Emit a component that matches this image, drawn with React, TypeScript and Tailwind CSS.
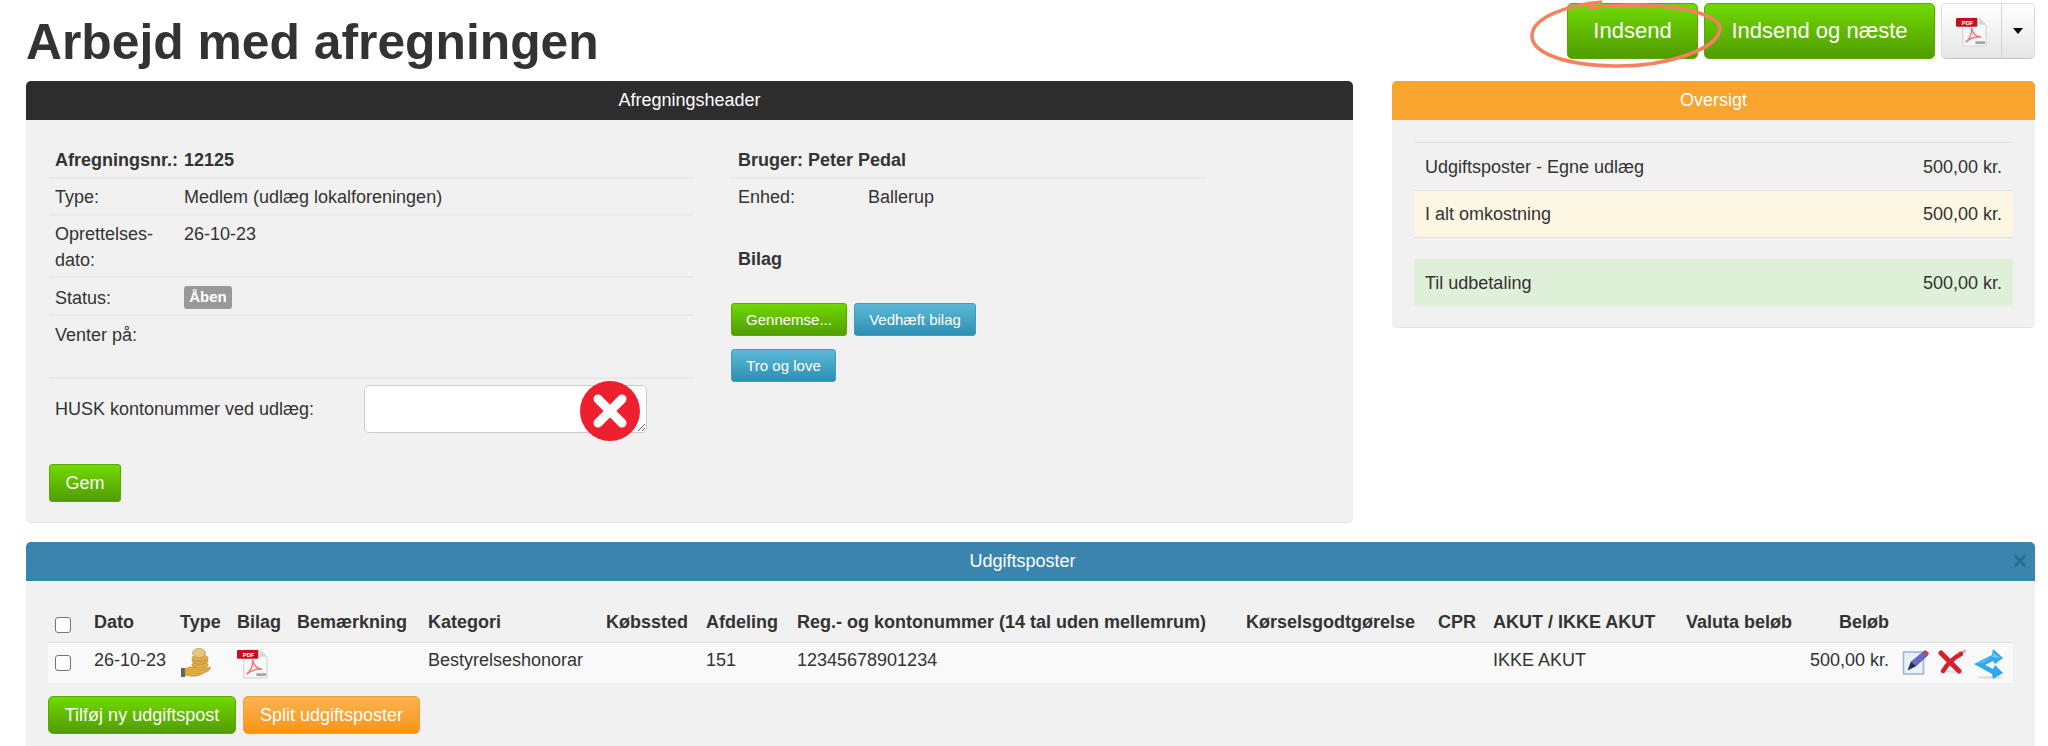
import React from 'react'

const green = 'bg-gradient-to-b from-[#70da00] to-[#519c00] border border-[#5aa800]'
const blue = 'bg-gradient-to-b from-[#5bb9d8] to-[#2f8fb2] border border-[#3f9dbf]'
const orange = 'bg-gradient-to-b from-[#fbb450] to-[#f89406] border border-[#f0a030]'

function PdfIcon({ className }: { className: string }) {
  return (
    <svg viewBox="0 0 32 32" className={className}>
      <path d="M7 2h17l7 7v22H7z" fill="#f7f7f7" stroke="#cfcfcf" />
      <path d="M24 2v7h7z" fill="#d5d5d5" />
      <rect x="0" y="2" width="22" height="9" rx="1" fill="#c5101c" />
      <text x="6" y="9" fontSize="6" fontWeight="700" fill="#fff" fontFamily="Liberation Sans, sans-serif">PDF</text>
      <path d="M10 27c4-3 7-9 6-15 1 6 4 9 10 10-6-1-11 1-16 5z" fill="none" stroke="#ec7a82" strokeWidth="1.6" />
      <rect x="20" y="26" width="10" height="3" fill="#a8a8a8" />
    </svg>
  )
}

function CoinsIcon() {
  return (
    <svg viewBox="0 0 32 30" className="w-[32px] h-[30px]">
      <path d="M1 20h4v9H1z" fill="#5c6670" />
      <path d="M5 21c5-3 9-2 12 0h5l8-2c1 1 0 3-2 4l-8 4c-6 2-10 1-15 0z" fill="#e2a93c" stroke="#b98722" strokeWidth=".6" />
      {[17, 13, 10].map((y) => (
        <ellipse key={y} cx="20" cy={y} rx="8" ry="3.2" fill="#dfae4c" stroke="#b98722" strokeWidth=".7" />
      ))}
      <ellipse cx="19" cy="5" rx="6.5" ry="4.6" fill="#e5c77f" stroke="#c49a3a" strokeWidth=".7" />
    </svg>
  )
}

function EditIcon() {
  return (
    <svg viewBox="0 0 28 26" className="w-[28px] h-[26px]">
      <rect x="1.5" y="3" width="20" height="22" fill="#e8f0fa" stroke="#a3b4d2" strokeWidth="1.6" />
      <path d="M6 21l3-8L21 3l5 3-12 11z" fill="#6a68c8" stroke="#4a46a0" strokeWidth=".6" />
      <path d="M21 3l2-2 4 3-1 2z" fill="#d8323a" />
      <path d="M6 21l3-8 5 4z" fill="#2c2c50" />
    </svg>
  )
}

function DeleteIcon() {
  return (
    <svg viewBox="0 0 28 26" className="w-[28px] h-[26px]" fill="none" strokeLinecap="round">
      <path d="M21 4L27 2" stroke="#eeaab0" strokeWidth="2.5" />
      <path d="M8 22L24 24" stroke="#e0e0e0" strokeWidth="2" />
      <path d="M3 4L21 22" stroke="#d8202c" strokeWidth="5" />
      <path d="M5 22C10 14 15 9 23 5" stroke="#d8202c" strokeWidth="4.5" />
    </svg>
  )
}

function ShareIcon() {
  return (
    <svg viewBox="0 0 30 30" className="w-[30px] h-[30px]">
      <ellipse cx="16" cy="28.5" rx="13" ry="1.4" fill="#dedede" />
      <path d="M0 15L18 6l1-6 10 9-8 6-2-3-8 4 8 4 2-4 8 8-10 6-1-5z" fill="#2fa8ee" />
      <path d="M2 15L18 8l2-4 6 5-8-1-8 5z" fill="#74caf6" />
    </svg>
  )
}

const HEAD = [
  'Dato', 'Type', 'Bilag', 'Bemærkning', 'Kategori', 'Købssted', 'Afdeling',
  'Reg.- og kontonummer (14 tal uden mellemrum)', 'Kørselsgodtgørelse', 'CPR',
  'AKUT / IKKE AKUT', 'Valuta beløb',
]

const box = 'block w-[16px] h-[16px] rounded-[3px] border border-[#767676] bg-white'

export default function App() {
  return (
    <div className="h-[746px] overflow-hidden bg-white pl-[26px] pr-[13px] text-[#333] text-[18px] leading-[26px] font-['Liberation_Sans',Arial,sans-serif]">
      <div className="h-[81px] flex justify-between">
        <h1 className="text-[49.8px] leading-[85px] font-bold">Arbejd med afregningen</h1>
        <div className="flex pt-[3px] h-[59px] text-white text-[22px]">
          <div className="relative">
            <button className={`h-[56px] w-[131px] rounded-[5px] ${green}`}>Indsend</button>
            {/* haandtegnet ring */}
            <svg viewBox="0 0 192 70" className="absolute left-[-37px] top-[-3px] w-[192px] h-[70px]" fill="none">
              <path d="M72 2C38 5 3 17 2 35c-1 17 30 30 82 31 50 1 104-16 106-37C191 12 130-1 58 8" stroke="#f6805f" strokeWidth="3.5" />
            </svg>
          </div>
          <button className={`ml-[6px] h-[56px] w-[231px] rounded-[5px] ${green}`}>Indsend og næste</button>
          <div className="ml-[6px] h-[56px] w-[94px] flex rounded-[5px] border border-[#dcdcdc] border-b-[#c4c4c4] bg-gradient-to-b from-white to-[#e6e6e6]">
            <div className="w-[60px] flex items-center justify-center border-r border-[#d4d4d4]">
              <PdfIcon className="w-[31px] h-[31px]" />
            </div>
            <div className="flex-1 flex items-center justify-center">
              <span className="w-0 h-0 border-x-[5px] border-x-transparent border-t-[6px] border-t-black" />
            </div>
          </div>
        </div>
      </div>

      <div className="flex gap-[39px] items-start">
        <section className="w-[1327px] h-[442px] bg-[#f1f1f1] rounded-[5px] border-b border-[#e4e4e4]">
          <div className="h-[39px] rounded-t-[5px] bg-[#2d2d2d] text-white text-center leading-[39px]">Afregningsheader</div>
          <div className="flex pl-[23px] pt-[18px]">
            <div className="w-[644px]">
              <div className="h-[41px] pl-[6px] pt-[9px] font-bold border-b-2 border-[#e9e9e9] flex">
                <span className="w-[129px]">Afregningsnr.:</span><span>12125</span>
              </div>
              <div className="h-[37px] pl-[6px] pt-[5px] border-b-2 border-[#e9e9e9] flex">
                <span className="w-[129px]">Type:</span><span>Medlem (udlæg lokalforeningen)</span>
              </div>
              <div className="h-[62px] pl-[6px] pt-[5px] border-b-2 border-[#e9e9e9] flex">
                <span className="w-[129px]">Oprettelses-<br />dato:</span><span>26-10-23</span>
              </div>
              <div className="h-[38px] pl-[6px] pt-[7px] border-b-2 border-[#e9e9e9] flex">
                <span className="w-[129px]">Status:</span>
                <span className="mt-[1px] h-[23px] w-[48px] text-center rounded-[3px] bg-[#999] text-white text-[15px] leading-[22px] font-bold">Åben</span>
              </div>
              <div className="h-[63px] pl-[6px] pt-[6px] border-b-2 border-[#e9e9e9]">Venter på:</div>
              <div className="flex items-start pt-[6px] pl-[6px]">
                <span className="w-[309px] pt-[11px]">HUSK kontonummer ved udlæg:</span>
                <div className="relative">
                  <textarea className="block w-[283px] h-[48px] bg-white rounded-[5px] border border-[#ccc]" />
                  <div className="absolute left-[216px] top-[-4px] w-[60px] h-[60px] rounded-full bg-[#ee1f2f] flex items-center justify-center">
                    <svg viewBox="0 0 40 40" className="w-[40px] h-[40px]">
                      <path d="M8 8l24 24M32 8L8 32" stroke="#fff" strokeWidth="9" strokeLinecap="round" />
                    </svg>
                  </div>
                </div>
              </div>
              <button className={`block mt-[31px] w-[72px] h-[38px] rounded-[3px] text-white ${green}`}>Gem</button>
            </div>
            <div className="ml-[38px] w-[474px]">
              <div className="h-[41px] pl-[7px] pt-[9px] font-bold border-b-2 border-[#e9e9e9]">Bruger: Peter Pedal</div>
              <div className="pl-[7px] pt-[5px] flex">
                <span className="w-[130px]">Enhed:</span><span>Ballerup</span>
              </div>
              <div className="pl-[7px] mt-[36px] font-bold">Bilag</div>
              <div className="mt-[31px] flex gap-[7px] text-white text-[15px]">
                <button className={`w-[116px] h-[33px] rounded-[3px] ${green}`}>Gennemse...</button>
                <button className={`w-[122px] h-[33px] rounded-[3px] ${blue}`}>Vedhæft bilag</button>
              </div>
              <button className={`block mt-[13px] w-[105px] h-[33px] rounded-[3px] text-white text-[15px] ${blue}`}>Tro og love</button>
            </div>
          </div>
        </section>

        <section className="w-[643px] h-[247px] bg-[#f1f1f1] rounded-[5px] border-b border-[#e4e4e4]">
          <div className="h-[39px] rounded-t-[5px] bg-[#f9a42f] text-white text-center leading-[39px]">Oversigt</div>
          <div className="px-[22px] pt-[22px]">
            <div className="h-[49px] px-[11px] flex items-center justify-between border-y border-[#e4e4e4]">
              <span>Udgiftsposter - Egne udlæg</span><span>500,00 kr.</span>
            </div>
            <div className="h-[47px] px-[11px] flex items-center justify-between bg-[#fdf6e3] border-b border-[#dedede]">
              <span>I alt omkostning</span><span>500,00 kr.</span>
            </div>
            <div className="mt-[21px] h-[47px] px-[11px] flex items-center justify-between bg-[#dff0d8]">
              <span>Til udbetaling</span><span>500,00 kr.</span>
            </div>
          </div>
        </section>
      </div>

      <section className="relative mt-[19px] h-[300px] bg-[#f1f1f1] rounded-t-[5px]">
        <div className="h-[39px] pr-[16px] rounded-t-[5px] bg-[#3a85ad] text-white text-center leading-[39px]">Udgiftsposter</div>
        <span className="absolute right-[8px] top-[6px] text-[24px] font-bold text-[#2b6a8a]">×</span>
        <div className="px-[22px] pt-[28px]">
          <table className="w-[1965px] table-fixed border-collapse text-left">
            <colgroup>
              <col className="w-[46px]" />
              <col className="w-[86px]" />
              <col className="w-[57px]" />
              <col className="w-[60px]" />
              <col className="w-[131px]" />
              <col className="w-[178px]" />
              <col className="w-[100px]" />
              <col className="w-[91px]" />
              <col className="w-[449px]" />
              <col className="w-[192px]" />
              <col className="w-[55px]" />
              <col className="w-[193px]" />
              <col className="w-[131px]" />
              <col className="w-[72px]" />
              <col />
            </colgroup>
            <thead>
              <tr className="h-[33px] border-b border-[#dedede] align-top">
                <th className="pl-[7px] pt-[8px] font-normal"><span className={box} /></th>
                {HEAD.map((h) => (
                  <th key={h} className="font-bold whitespace-nowrap">{h}</th>
                ))}
                <th className="font-bold text-right">Beløb</th>
                <th />
              </tr>
            </thead>
            <tbody>
              <tr className="h-[41px] bg-[#f9f9f9] align-top">
                <td className="pl-[7px] pt-[12px]"><span className={box} /></td>
                <td className="pt-[4px]">26-10-23</td>
                <td className="pt-[5px]"><CoinsIcon /></td>
                <td className="pt-[5px]"><PdfIcon className="w-[31px] h-[31px]" /></td>
                <td />
                <td className="pt-[4px]">Bestyrelseshonorar</td>
                <td />
                <td className="pt-[4px]">151</td>
                <td className="pt-[4px]">12345678901234</td>
                <td />
                <td />
                <td className="pt-[4px]">IKKE AKUT</td>
                <td colSpan={2} className="pt-[4px] text-right whitespace-nowrap">500,00 kr.</td>
                <td className="pl-[13px] pt-[6px]">
                  <div className="flex gap-[8px] items-start">
                    <EditIcon /><DeleteIcon /><ShareIcon />
                  </div>
                </td>
              </tr>
            </tbody>
          </table>
          <div className="mt-[13px] flex gap-[7px] text-white">
            <button className={`w-[188px] h-[38px] rounded-[5px] ${green}`}>Tilføj ny udgiftspost</button>
            <button className={`w-[177px] h-[38px] rounded-[5px] ${orange}`}>Split udgiftsposter</button>
          </div>
        </div>
      </section>
    </div>
  )
}
